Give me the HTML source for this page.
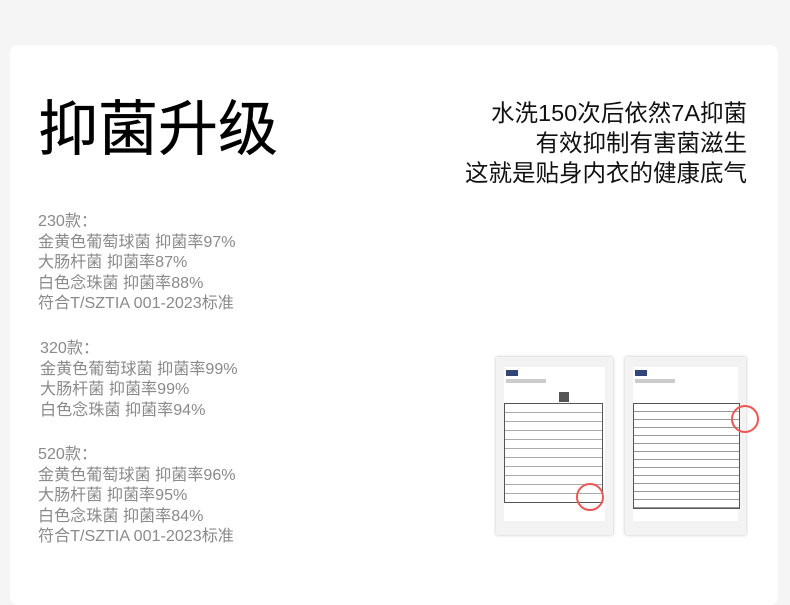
<!DOCTYPE html>
<html><head><meta charset="utf-8"><style>
body{margin:0;width:790px;height:575px;background:#f5f5f5;position:relative;overflow:hidden;font-family:"Liberation Sans","Noto Sans CJK SC",sans-serif}
.card{position:absolute;left:10px;top:45px;width:768px;height:560px;background:#fff;border-radius:8px}
.t{position:absolute;left:38px;top:90px;font-size:60px;color:#000;line-height:80px;font-weight:400;-webkit-text-stroke:0.3px #000}
.r{position:absolute;right:43px;top:98px;text-align:right;font-size:23.5px;line-height:30px;color:#111}
.g{position:absolute;left:38px;font-size:16.1px;line-height:20.5px;color:#8a8a8a}
.doc{position:absolute;top:357px;height:178px;background:#f3f3f3;box-shadow:0 0 3px rgba(0,0,0,.25)}
.in{position:absolute;left:8px;top:10px;right:8px;bottom:14px;background:#fff}
.tb{position:absolute;border:1px solid #555;background:repeating-linear-gradient(#fff 0 8px,#aaa 8px 9px)}
.st{position:absolute;width:24px;height:24px;border:2px solid #e55;border-radius:50%}
</style></head><body>
<div class="card"></div>
<div class="t">抑菌升级</div>
<div class="r">水洗150次后依然7A抑菌<br>有效抑制有害菌滋生<br>这就是贴身内衣的健康底气</div>
<div class="g" style="top:211px">230款：<br>金黄色葡萄球菌 抑菌率97%<br>大肠杆菌 抑菌率87%<br>白色念珠菌 抑菌率88%<br>符合T/SZTIA 001-2023标准</div>
<div class="g" style="top:338px;left:40px">320款：<br>金黄色葡萄球菌 抑菌率99%<br>大肠杆菌 抑菌率99%<br>白色念珠菌 抑菌率94%</div>
<div class="g" style="top:444px">520款：<br>金黄色葡萄球菌 抑菌率96%<br>大肠杆菌 抑菌率95%<br>白色念珠菌 抑菌率84%<br>符合T/SZTIA 001-2023标准</div>
<div class="doc" style="left:496px;width:117px"><div class="in">
<div style="position:absolute;left:2px;top:3px;width:12px;height:6px;background:#347"></div>
<div style="position:absolute;left:2px;top:12px;width:40px;height:4px;background:#ccc"></div>
<div style="position:absolute;left:55px;top:25px;width:10px;height:10px;background:#555"></div>
<div class="tb" style="left:0;top:36px;width:97px;height:98px"></div>
<div class="st" style="left:72px;top:116px"></div></div></div>
<div class="doc" style="left:625px;width:121px"><div class="in">
<div style="position:absolute;left:2px;top:3px;width:12px;height:6px;background:#347"></div>
<div style="position:absolute;left:2px;top:12px;width:40px;height:4px;background:#ccc"></div>
<div class="tb" style="left:0;top:36px;width:105px;height:104px;background:repeating-linear-gradient(#fff 0 7px,#999 7px 8px)"></div>
<div class="st" style="left:98px;top:38px"></div></div></div>
</body></html>
